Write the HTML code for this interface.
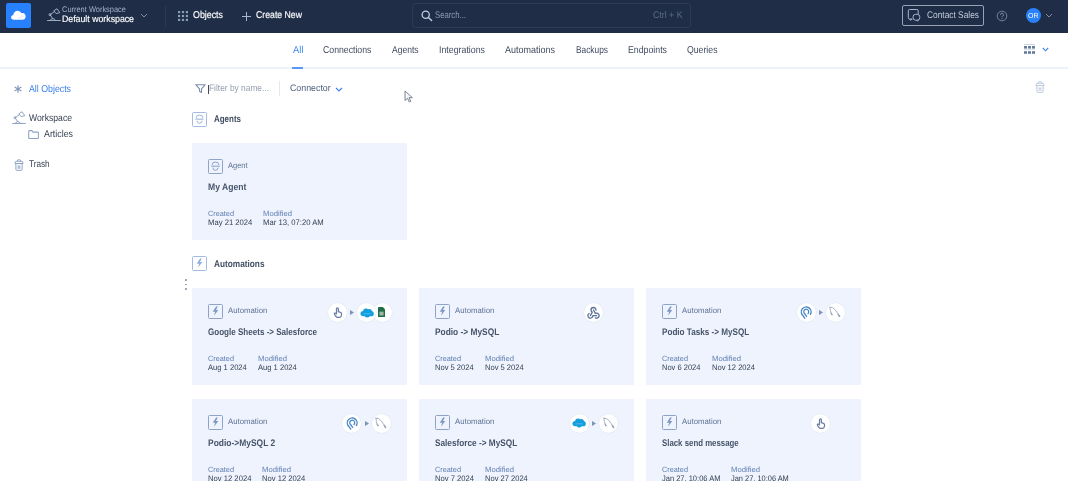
<!DOCTYPE html>
<html><head><meta charset="utf-8"><style>
html,body{margin:0;padding:0;width:1068px;height:481px;overflow:hidden;background:#fff;font-family:"Liberation Sans", sans-serif;}
.t{position:absolute;white-space:nowrap;line-height:1;transform-origin:0 0;filter:blur(0.25px);text-rendering:geometricPrecision}
svg{overflow:visible}
</style></head><body>
<div style="position:absolute;left:0;top:0;width:1068px;height:33px;background:#1f2d47"></div><div style="position:absolute;left:6px;top:3px;width:25px;height:25px;background:#2780fd;border-radius:2px"></div><svg style="position:absolute;left:10px;top:8.3px" width="17" height="13.4" viewBox="0 0 19 15">
<path d="M4.3 13.2 C2.3 13.2 1.2 11.9 1.2 10.5 C1.2 9.1 2.3 8.0 3.7 7.9 C3.9 5.2 5.9 3.2 8.5 3.2 C10.4 3.2 12.0 4.3 12.7 5.9 C13.1 5.8 13.5 5.7 13.9 5.7 C15.9 5.7 17.5 7.3 17.5 9.4 C17.5 11.5 16.0 13.2 14.0 13.2 Z" fill="#fff"/>
<path d="M8.5 12.2 L14.5 7.6 M10.5 12.4 L15.8 8.8" stroke="#c9dcfb" stroke-width="0.6" fill="none"/>
</svg><svg style="position:absolute;left:47px;top:8px" width="14" height="14" viewBox="0 0 13 13"><path d="M0.5 11.6 H12.5 M3 11.6 Q3.4 9.9 5.4 9.9 Q7.4 9.9 7.8 11.6 M5.4 9.9 L2.8 6.3 L6.8 3.4" stroke="#aab6c9" stroke-width="0.85" fill="none" stroke-linejoin="round" stroke-linecap="round"/><circle cx="2.8" cy="6.2" r="0.95" stroke="#aab6c9" stroke-width="0.8" fill="none"/><path d="M6.3 2.6 L9.3 0.7 L11.9 4.3 L8.5 5.2 Z" stroke="#aab6c9" stroke-width="0.85" fill="none" stroke-linejoin="round"/></svg><svg style="position:absolute;left:140px;top:13px" width="8" height="5" viewBox="0 0 8 5"><path d="M1 1 L4 4 L7 1" stroke="#8a97ad" stroke-width="0.9" fill="none"/></svg><div style="position:absolute;left:165px;top:6px;width:1px;height:21px;background:#2c3b54"></div><svg style="position:absolute;left:178px;top:10.5px" width="10" height="10" viewBox="0 0 10 10"><rect x="0" y="0" width="2.2" height="2.2" fill="#8e9cb4"/><rect x="0" y="3.9" width="2.2" height="2.2" fill="#8e9cb4"/><rect x="0" y="7.8" width="2.2" height="2.2" fill="#8e9cb4"/><rect x="3.9" y="0" width="2.2" height="2.2" fill="#8e9cb4"/><rect x="3.9" y="3.9" width="2.2" height="2.2" fill="#8e9cb4"/><rect x="3.9" y="7.8" width="2.2" height="2.2" fill="#8e9cb4"/><rect x="7.8" y="0" width="2.2" height="2.2" fill="#8e9cb4"/><rect x="7.8" y="3.9" width="2.2" height="2.2" fill="#8e9cb4"/><rect x="7.8" y="7.8" width="2.2" height="2.2" fill="#8e9cb4"/></svg><svg style="position:absolute;left:242px;top:11.5px" width="9" height="9" viewBox="0 0 9 9"><path d="M4.5 0 V9 M0 4.5 H9" stroke="#aab6c9" stroke-width="1"/></svg><div style="position:absolute;left:412px;top:3px;width:277px;height:23px;border:1px solid #2c3b54;border-radius:3px;box-sizing:content-box"></div><svg style="position:absolute;left:421px;top:10px" width="12" height="12" viewBox="0 0 12 12"><circle cx="4.7" cy="4.7" r="3.6" stroke="#c3cee0" stroke-width="1.3" fill="none"/><path d="M7.4 7.4 L10.6 10.6" stroke="#c3cee0" stroke-width="1.4" stroke-linecap="round"/></svg><div style="position:absolute;left:902px;top:5px;width:80px;height:19px;border:1px solid #98a2b3;border-radius:2px;box-sizing:content-box"></div><svg style="position:absolute;left:907px;top:9px" width="14" height="13" viewBox="0 0 14 13">
<path d="M5.5 10 H2.6 Q1.3 10 1.3 8.7 V1.8 Q1.3 0.5 2.6 0.5 H9.9 Q11.2 0.5 11.2 1.8 V5.2 M2.8 10 L3.5 11.4 L4.9 10" stroke="#a9b6cb" stroke-width="1" fill="none" stroke-linejoin="round"/>
<rect x="6" y="5.3" width="6.8" height="5.9" rx="2.6" stroke="#a9b6cb" stroke-width="1" fill="#1f2d47"/>
<path d="M9.8 11.2 L10.6 12.2 L11.4 11" stroke="#a9b6cb" stroke-width="1" fill="none" stroke-linejoin="round"/>
</svg><svg style="position:absolute;left:996px;top:9.5px" width="12" height="12" viewBox="0 0 12 12"><circle cx="6" cy="6" r="4.8" stroke="#7f8ba0" stroke-width="0.9" fill="none"/><path d="M4.5 4.8 A1.5 1.5 0 1 1 6.3 6.2 Q6 6.4 6 7.1" stroke="#8b97ab" stroke-width="0.9" fill="none"/><circle cx="6" cy="8.6" r="0.55" fill="#8b97ab"/></svg><div style="position:absolute;left:1026px;top:7.5px;width:15px;height:15px;border-radius:50%;background:#2982fc"></div><svg style="position:absolute;left:1045px;top:13px" width="8" height="5" viewBox="0 0 8 5"><path d="M1 1 L4 4 L7 1" stroke="#8a97ad" stroke-width="0.9" fill="none"/></svg><div style="position:absolute;left:0;top:67px;width:1068px;height:2px;background:#eef3fb"></div><div style="position:absolute;left:292px;top:67px;width:11px;height:2px;background:#5598f5"></div><svg style="position:absolute;left:1024px;top:43.5px" width="11" height="11" viewBox="0 0 11 11">
<rect x="0" y="0.3" width="11" height="0.7" fill="#b7c2d3"/>
<rect x="0" y="2" width="3" height="2.6" fill="#677b9b"/><rect x="4" y="2" width="3" height="2.6" fill="#677b9b"/><rect x="8" y="2" width="3" height="2.6" fill="#677b9b"/>
<rect x="0" y="5.4" width="11" height="0.7" fill="#c8d1de"/>
<rect x="0" y="7.2" width="3" height="2.6" fill="#677b9b"/><rect x="4" y="7.2" width="3" height="2.6" fill="#677b9b"/><rect x="8" y="7.2" width="3" height="2.6" fill="#677b9b"/>
</svg><svg style="position:absolute;left:1041.5px;top:47px" width="7" height="5" viewBox="0 0 7 5"><path d="M0.8 1 L3.5 3.8 L6.2 1" stroke="#3d86f0" stroke-width="1.1" fill="none"/></svg><svg style="position:absolute;left:1035px;top:81px" width="10" height="12" viewBox="0 0 10 12"><path d="M3.2 2.3 Q3.2 0.7 4.6 0.7 H5.4 Q6.8 0.7 6.8 2.3 M1 4.5 V3.9 Q1 2.3 2.6 2.3 H7.4 Q9 2.3 9 3.9 V4.5 Z M1.9 4.9 V10.4 Q1.9 11.3 2.8 11.3 H7.2 Q8.1 11.3 8.1 10.4 V4.9 M4.2 6.4 V9.8 M5.8 6.4 V9.8" stroke="#b4c2d8" stroke-width="0.9" fill="none" stroke-linejoin="round"/></svg><svg style="position:absolute;left:14.2px;top:85.3px" width="8" height="8" viewBox="0 0 8 8"><path d="M4 0.2 V7.8 M0.6 2.1 L7.4 5.9 M0.6 5.9 L7.4 2.1" stroke="#8397b8" stroke-width="1.15"/></svg><svg style="position:absolute;left:11.5px;top:110.5px" width="14" height="14" viewBox="0 0 13 13"><path d="M0.5 11.6 H12.5 M3 11.6 Q3.4 9.9 5.4 9.9 Q7.4 9.9 7.8 11.6 M5.4 9.9 L2.8 6.3 L6.8 3.4" stroke="#8a9dbd" stroke-width="0.85" fill="none" stroke-linejoin="round" stroke-linecap="round"/><circle cx="2.8" cy="6.2" r="0.95" stroke="#8a9dbd" stroke-width="0.8" fill="none"/><path d="M6.3 2.6 L9.3 0.7 L11.9 4.3 L8.5 5.2 Z" stroke="#8a9dbd" stroke-width="0.85" fill="none" stroke-linejoin="round"/></svg><svg style="position:absolute;left:28px;top:130px" width="11" height="9" viewBox="0 0 11 9"><path d="M0.7 1.5 Q0.7 0.6 1.6 0.6 H3.9 L5.1 2.1 H9.5 Q10.4 2.1 10.4 3 V7.7 Q10.4 8.5 9.6 8.5 H1.5 Q0.7 8.5 0.7 7.7 Z" stroke="#8ea2c6" stroke-width="1.05" fill="none" stroke-linejoin="round"/></svg><svg style="position:absolute;left:13.5px;top:158.5px" width="10" height="12" viewBox="0 0 10 12"><path d="M3.2 2.3 Q3.2 0.7 4.6 0.7 H5.4 Q6.8 0.7 6.8 2.3 M1 4.5 V3.9 Q1 2.3 2.6 2.3 H7.4 Q9 2.3 9 3.9 V4.5 Z M1.9 4.9 V10.4 Q1.9 11.3 2.8 11.3 H7.2 Q8.1 11.3 8.1 10.4 V4.9 M4.2 6.4 V9.8 M5.8 6.4 V9.8" stroke="#8ea3c8" stroke-width="1" fill="none" stroke-linejoin="round"/></svg><svg style="position:absolute;left:194.5px;top:84px" width="11" height="9" viewBox="0 0 11 9"><path d="M0.7 0.7 H10.3 L6.5 4.9 V8.4 L4.5 7.3 V4.9 Z" stroke="#7d8ea8" stroke-width="1.1" fill="none" stroke-linejoin="round"/></svg><div style="position:absolute;left:207.5px;top:84.5px;width:1px;height:9px;background:#3e4a5c"></div><div style="position:absolute;left:279px;top:81px;width:1px;height:15px;background:#e4e9f0"></div><svg style="position:absolute;left:334.5px;top:87px" width="8" height="5" viewBox="0 0 8 5"><path d="M1 1 L4 4 L7 1" stroke="#3d86f0" stroke-width="1.1" fill="none"/></svg><svg style="position:absolute;left:404px;top:90px" width="10" height="13" viewBox="0 0 10 13"><path d="M1 1 V10.5 L3.5 8.3 L5.3 12 L6.8 11.3 L5 7.7 H8.4 Z" fill="#f4f6fa" stroke="#6f7786" stroke-width="0.9" stroke-linejoin="round"/></svg><svg style="position:absolute;left:192px;top:111.5px" width="15" height="15" viewBox="0 0 15 15"><rect x="0.5" y="0.5" width="14" height="14" rx="1" stroke="#a3bbe3" stroke-width="1" fill="none"/><path d="M4.3 6.1 V5.3 Q4.3 3.1 7.5 3.1 Q10.7 3.1 10.7 5.3 V6.1 M4.9 8.7 Q5.2 11.3 7.5 11.3 Q9.8 11.3 10.1 8.7" stroke="#8eaadb" stroke-width="0.9" fill="none"/><path d="M3.4 7.2 H11.6" stroke="#8eaadb" stroke-width="1.2" opacity="0.8"/></svg><svg style="position:absolute;left:192px;top:256px" width="15" height="15" viewBox="0 0 15 15"><rect x="0.5" y="0.5" width="14" height="14" rx="1" stroke="#a3bbe3" stroke-width="1" fill="none"/><path d="M8.1 2.5 L4.8 7.7 H7.2 L6.0 11.8 L10.3 6.1 H7.9 L9.8 2.5 Z" fill="#8eaddf"/></svg><div style="position:absolute;left:185.3px;top:279.3px;width:1.4px;height:1.4px;border-radius:50%;background:#8d9bb0"></div><div style="position:absolute;left:185.3px;top:283.8px;width:1.4px;height:1.4px;border-radius:50%;background:#8d9bb0"></div><div style="position:absolute;left:185.3px;top:288.3px;width:1.4px;height:1.4px;border-radius:50%;background:#8d9bb0"></div><div style="position:absolute;left:192px;top:143px;width:215px;height:97px;background:#eef3fd;border-radius:1px"></div><svg style="position:absolute;left:208px;top:158.5px" width="15" height="15" viewBox="0 0 15 15"><rect x="0.5" y="0.5" width="14" height="14" rx="1" stroke="#8ea3c5" stroke-width="1" fill="none"/><path d="M4.3 6.1 V5.3 Q4.3 3.1 7.5 3.1 Q10.7 3.1 10.7 5.3 V6.1 M4.9 8.7 Q5.2 11.3 7.5 11.3 Q9.8 11.3 10.1 8.7" stroke="#7f98c2" stroke-width="0.9" fill="none"/><path d="M3.4 7.2 H11.6" stroke="#7f98c2" stroke-width="1.2" opacity="0.8"/></svg><div style="position:absolute;left:192px;top:288px;width:215px;height:97px;background:#eef3fd;border-radius:1px"></div><svg style="position:absolute;left:208px;top:303.5px" width="15" height="15" viewBox="0 0 15 15"><rect x="0.5" y="0.5" width="14" height="14" rx="1" stroke="#8ea3c5" stroke-width="1" fill="none"/><path d="M8.1 2.5 L4.8 7.7 H7.2 L6.0 11.8 L10.3 6.1 H7.9 L9.8 2.5 Z" fill="#7f98c2"/></svg><div style="position:absolute;left:419px;top:288px;width:215px;height:97px;background:#eef3fd;border-radius:1px"></div><svg style="position:absolute;left:435px;top:303.5px" width="15" height="15" viewBox="0 0 15 15"><rect x="0.5" y="0.5" width="14" height="14" rx="1" stroke="#8ea3c5" stroke-width="1" fill="none"/><path d="M8.1 2.5 L4.8 7.7 H7.2 L6.0 11.8 L10.3 6.1 H7.9 L9.8 2.5 Z" fill="#7f98c2"/></svg><div style="position:absolute;left:646px;top:288px;width:215px;height:97px;background:#eef3fd;border-radius:1px"></div><svg style="position:absolute;left:662px;top:303.5px" width="15" height="15" viewBox="0 0 15 15"><rect x="0.5" y="0.5" width="14" height="14" rx="1" stroke="#8ea3c5" stroke-width="1" fill="none"/><path d="M8.1 2.5 L4.8 7.7 H7.2 L6.0 11.8 L10.3 6.1 H7.9 L9.8 2.5 Z" fill="#7f98c2"/></svg><div style="position:absolute;left:192px;top:399px;width:215px;height:97px;background:#eef3fd;border-radius:1px"></div><svg style="position:absolute;left:208px;top:414.5px" width="15" height="15" viewBox="0 0 15 15"><rect x="0.5" y="0.5" width="14" height="14" rx="1" stroke="#8ea3c5" stroke-width="1" fill="none"/><path d="M8.1 2.5 L4.8 7.7 H7.2 L6.0 11.8 L10.3 6.1 H7.9 L9.8 2.5 Z" fill="#7f98c2"/></svg><div style="position:absolute;left:419px;top:399px;width:215px;height:97px;background:#eef3fd;border-radius:1px"></div><svg style="position:absolute;left:435px;top:414.5px" width="15" height="15" viewBox="0 0 15 15"><rect x="0.5" y="0.5" width="14" height="14" rx="1" stroke="#8ea3c5" stroke-width="1" fill="none"/><path d="M8.1 2.5 L4.8 7.7 H7.2 L6.0 11.8 L10.3 6.1 H7.9 L9.8 2.5 Z" fill="#7f98c2"/></svg><div style="position:absolute;left:646px;top:399px;width:215px;height:97px;background:#eef3fd;border-radius:1px"></div><svg style="position:absolute;left:662px;top:414.5px" width="15" height="15" viewBox="0 0 15 15"><rect x="0.5" y="0.5" width="14" height="14" rx="1" stroke="#8ea3c5" stroke-width="1" fill="none"/><path d="M8.1 2.5 L4.8 7.7 H7.2 L6.0 11.8 L10.3 6.1 H7.9 L9.8 2.5 Z" fill="#7f98c2"/></svg><div style="position:absolute;left:372.5px;top:302.5px;width:19px;height:19px;border-radius:50%;background:#fff;box-shadow:0 0 0 0.5px #dde6f3"></div><div style="position:absolute;left:357.0px;top:302.5px;width:19px;height:19px;border-radius:50%;background:#fff;box-shadow:0 0 0 0.5px #dde6f3"></div><div style="position:absolute;left:328.0px;top:302.5px;width:19px;height:19px;border-radius:50%;background:#fff;box-shadow:0 0 0 0.5px #dde6f3"></div><svg style="position:absolute;left:350px;top:309.5px" width="4" height="5" viewBox="0 0 4 5"><path d="M0 0 L4 2.5 L0 5 Z" fill="#7d93b6"/></svg><svg style="position:absolute;left:332.5px;top:306.8px" width="10" height="11" viewBox="0 0 10 11"><path d="M3.5 6.3 V1.7 A0.95 0.95 0 0 1 5.4 1.7 V4.7 L7.4 5.3 Q8.8 5.8 8.6 7.3 L8.3 8.8 Q7.9 10.3 6.3 10.3 H4.8 Q3.6 10.3 2.9 9.3 L1.5 7.3 Q1.0 6.4 1.9 6.1 Q2.7 5.9 3.5 6.9" stroke="#6a7ea3" stroke-width="1.25" fill="none" stroke-linejoin="round" stroke-linecap="round"/></svg><svg style="position:absolute;left:359.5px;top:307.5px" width="14" height="10" viewBox="0 0 14 10"><g fill="#139fdd"><circle cx="3.2" cy="5.6" r="2.7"/><circle cx="6" cy="3.5" r="2.9"/><circle cx="9.4" cy="3.4" r="2.5"/><circle cx="11.2" cy="5.7" r="2.6"/><circle cx="7.2" cy="6.6" r="3"/></g><path d="M3.4 5.8 H10.6" stroke="#8fd0f0" stroke-width="0.5"/></svg><svg style="position:absolute;left:378px;top:307px" width="7" height="10" viewBox="0 0 7 10"><path d="M0 0.6 Q0 0 0.6 0 H4.8 L7 2.2 V9.4 Q7 10 6.4 10 H0.6 Q0 10 0 9.4 Z" fill="#1f6e48"/><rect x="1.4" y="4.6" width="4.2" height="3.9" fill="#9fb5a8"/></svg><div style="position:absolute;left:584.0px;top:302.5px;width:19px;height:19px;border-radius:50%;background:#fff;box-shadow:0 0 0 0.5px #dde6f3"></div><svg style="position:absolute;left:586px;top:304.6px" width="15" height="15" viewBox="0 0 24 24"><path d="M4.876 13.61a4 4 0 1 0 6.124 3.39h6 M15.066 20.502a4 4 0 1 0 1.934 -7.502c-.706 0 -1.424 .179 -2 .5l-3 -5.5 M16 8a4 4 0 1 0 -8 0c0 1.506 .77 2.818 2 3.5l-3 5.5" stroke="#5a7099" stroke-width="2.1" fill="none" stroke-linecap="round" stroke-linejoin="round"/></svg><div style="position:absolute;left:796.5px;top:302.5px;width:19px;height:19px;border-radius:50%;background:#fff;box-shadow:0 0 0 0.5px #dde6f3"></div><svg style="position:absolute;left:819px;top:309.5px" width="4" height="5" viewBox="0 0 4 5"><path d="M0 0 L4 2.5 L0 5 Z" fill="#7d93b6"/></svg><div style="position:absolute;left:825.5px;top:302.5px;width:19px;height:19px;border-radius:50%;background:#fff;box-shadow:0 0 0 0.5px #dde6f3"></div><svg style="position:absolute;left:800px;top:305.5px" width="12" height="13" viewBox="0 0 12 13"><path d="M4.7 12.1 L3.0 9.6 A4.9 4.9 0 1 1 10.4 8.4" stroke="#4684c4" stroke-width="1.35" fill="none" stroke-linecap="round"/><path d="M6.6 10.4 L4.8 7.8 A2.5 2.5 0 1 1 8.0 7.5" stroke="#4684c4" stroke-width="1.25" fill="none" stroke-linecap="round"/></svg><svg style="position:absolute;left:829px;top:306px" width="12" height="12" viewBox="0 0 12 12"><path d="M0.9 1.1 Q3.8 0.7 6.3 3.9 Q8.4 6.7 10.5 10.2 M0.9 1.1 Q1.1 5 2.5 8.0 L3.5 8.7" stroke="#97a5bb" stroke-width="0.85" fill="none" stroke-linecap="round" stroke-linejoin="round"/><path d="M9.3 8.5 L10.6 10.5" stroke="#97a5bb" stroke-width="1.5" stroke-linecap="round"/><path d="M2.2 7.2 L2.9 8.6" stroke="#97a5bb" stroke-width="1.3" stroke-linecap="round"/></svg><div style="position:absolute;left:342.1px;top:413.5px;width:19px;height:19px;border-radius:50%;background:#fff;box-shadow:0 0 0 0.5px #dde6f3"></div><svg style="position:absolute;left:365px;top:420.5px" width="4" height="5" viewBox="0 0 4 5"><path d="M0 0 L4 2.5 L0 5 Z" fill="#7d93b6"/></svg><div style="position:absolute;left:371.8px;top:413.5px;width:19px;height:19px;border-radius:50%;background:#fff;box-shadow:0 0 0 0.5px #dde6f3"></div><svg style="position:absolute;left:345.6px;top:416.5px" width="12" height="13" viewBox="0 0 12 13"><path d="M4.7 12.1 L3.0 9.6 A4.9 4.9 0 1 1 10.4 8.4" stroke="#4684c4" stroke-width="1.35" fill="none" stroke-linecap="round"/><path d="M6.6 10.4 L4.8 7.8 A2.5 2.5 0 1 1 8.0 7.5" stroke="#4684c4" stroke-width="1.25" fill="none" stroke-linecap="round"/></svg><svg style="position:absolute;left:375.3px;top:417px" width="12" height="12" viewBox="0 0 12 12"><path d="M0.9 1.1 Q3.8 0.7 6.3 3.9 Q8.4 6.7 10.5 10.2 M0.9 1.1 Q1.1 5 2.5 8.0 L3.5 8.7" stroke="#97a5bb" stroke-width="0.85" fill="none" stroke-linecap="round" stroke-linejoin="round"/><path d="M9.3 8.5 L10.6 10.5" stroke="#97a5bb" stroke-width="1.5" stroke-linecap="round"/><path d="M2.2 7.2 L2.9 8.6" stroke="#97a5bb" stroke-width="1.3" stroke-linecap="round"/></svg><div style="position:absolute;left:569.8px;top:413.5px;width:19px;height:19px;border-radius:50%;background:#fff;box-shadow:0 0 0 0.5px #dde6f3"></div><svg style="position:absolute;left:592px;top:420.5px" width="4" height="5" viewBox="0 0 4 5"><path d="M0 0 L4 2.5 L0 5 Z" fill="#7d93b6"/></svg><div style="position:absolute;left:599.0px;top:413.5px;width:19px;height:19px;border-radius:50%;background:#fff;box-shadow:0 0 0 0.5px #dde6f3"></div><svg style="position:absolute;left:572.3px;top:418px" width="14" height="10" viewBox="0 0 14 10"><g fill="#139fdd"><circle cx="3.2" cy="5.6" r="2.7"/><circle cx="6" cy="3.5" r="2.9"/><circle cx="9.4" cy="3.4" r="2.5"/><circle cx="11.2" cy="5.7" r="2.6"/><circle cx="7.2" cy="6.6" r="3"/></g><path d="M3.4 5.8 H10.6" stroke="#8fd0f0" stroke-width="0.5"/></svg><svg style="position:absolute;left:602.5px;top:417px" width="12" height="12" viewBox="0 0 12 12"><path d="M0.9 1.1 Q3.8 0.7 6.3 3.9 Q8.4 6.7 10.5 10.2 M0.9 1.1 Q1.1 5 2.5 8.0 L3.5 8.7" stroke="#97a5bb" stroke-width="0.85" fill="none" stroke-linecap="round" stroke-linejoin="round"/><path d="M9.3 8.5 L10.6 10.5" stroke="#97a5bb" stroke-width="1.5" stroke-linecap="round"/><path d="M2.2 7.2 L2.9 8.6" stroke="#97a5bb" stroke-width="1.3" stroke-linecap="round"/></svg><div style="position:absolute;left:811.0px;top:413.5px;width:19px;height:19px;border-radius:50%;background:#fff;box-shadow:0 0 0 0.5px #dde6f3"></div><svg style="position:absolute;left:815.5px;top:417.8px" width="10" height="11" viewBox="0 0 10 11"><path d="M3.5 6.3 V1.7 A0.95 0.95 0 0 1 5.4 1.7 V4.7 L7.4 5.3 Q8.8 5.8 8.6 7.3 L8.3 8.8 Q7.9 10.3 6.3 10.3 H4.8 Q3.6 10.3 2.9 9.3 L1.5 7.3 Q1.0 6.4 1.9 6.1 Q2.7 5.9 3.5 6.9" stroke="#6a7ea3" stroke-width="1.25" fill="none" stroke-linejoin="round" stroke-linecap="round"/></svg>
<div class=t style='left:62px;top:6.00px;font-size:8.2px;font-weight:400;color:#a6b3c8;transform:scaleX(0.9092);'>Current Workspace</div><div class=t style='left:62px;top:15.00px;font-size:9.45px;font-weight:400;color:#ffffff;transform:scaleX(0.9273);-webkit-text-stroke:0.15px #fff;'>Default workspace</div><div class=t style='left:193px;top:11.00px;font-size:9.9px;font-weight:400;color:#ffffff;transform:scaleX(0.8959);-webkit-text-stroke:0.15px #fff;'>Objects</div><div class=t style='left:256px;top:11.00px;font-size:9.9px;font-weight:400;color:#ffffff;transform:scaleX(0.8822);-webkit-text-stroke:0.15px #fff;'>Create New</div><div class=t style='left:435px;top:11.00px;font-size:9.6px;font-weight:400;color:#8b9ab2;transform:scaleX(0.8072);'>Search...</div><div class=t style='left:653px;top:11.00px;font-size:9.6px;font-weight:400;color:#5d6d87;transform:scaleX(0.9143);'>Ctrl + K</div><div class=t style='left:927px;top:11.00px;font-size:9.6px;font-weight:400;color:#c3cbd8;transform:scaleX(0.8705);'>Contact Sales</div><div class=t style='left:1028.3px;top:12.00px;font-size:7.2px;font-weight:400;color:#ffffff;transform:scaleX(0.9739);'>OR</div><div class=t style='left:292.6px;top:46.00px;font-size:9.9px;font-weight:400;color:#3f8af0;transform:scaleX(0.9559);'>All</div><div class=t style='left:323px;top:46.00px;font-size:9.9px;font-weight:400;color:#3f4b60;transform:scaleX(0.8815);'>Connections</div><div class=t style='left:392px;top:46.00px;font-size:9.9px;font-weight:400;color:#3f4b60;transform:scaleX(0.8650);'>Agents</div><div class=t style='left:439px;top:46.00px;font-size:9.9px;font-weight:400;color:#3f4b60;transform:scaleX(0.8913);'>Integrations</div><div class=t style='left:505px;top:46.00px;font-size:9.9px;font-weight:400;color:#3f4b60;transform:scaleX(0.9106);'>Automations</div><div class=t style='left:575.5px;top:46.00px;font-size:9.9px;font-weight:400;color:#3f4b60;transform:scaleX(0.8445);'>Backups</div><div class=t style='left:627.5px;top:46.00px;font-size:9.9px;font-weight:400;color:#3f4b60;transform:scaleX(0.8879);'>Endpoints</div><div class=t style='left:686.5px;top:46.00px;font-size:9.9px;font-weight:400;color:#3f4b60;transform:scaleX(0.8821);'>Queries</div><div class=t style='left:28.7px;top:85.00px;font-size:9.9px;font-weight:400;color:#3a80ea;transform:scaleX(0.8898);'>All Objects</div><div class=t style='left:28.7px;top:114.00px;font-size:9.9px;font-weight:400;color:#333e50;transform:scaleX(0.8737);'>Workspace</div><div class=t style='left:43.7px;top:130.00px;font-size:9.9px;font-weight:400;color:#333e50;transform:scaleX(0.8958);'>Articles</div><div class=t style='left:28.7px;top:160.00px;font-size:9.7px;font-weight:400;color:#333e50;transform:scaleX(0.8440);'>Trash</div><div class=t style='left:208.6px;top:84.00px;font-size:9.45px;font-weight:400;color:#959fae;transform:scaleX(0.8866);'>Filter by name...</div><div class=t style='left:290px;top:84.00px;font-size:9.45px;font-weight:400;color:#4f6080;transform:scaleX(0.9346);'>Connector</div><div class=t style='left:214px;top:115.00px;font-size:9.7px;font-weight:700;color:#414d63;transform:scaleX(0.8221);'>Agents</div><div class=t style='left:214px;top:260.00px;font-size:9.7px;font-weight:700;color:#414d63;transform:scaleX(0.8530);'>Automations</div><div class=t style='left:228.4px;top:162.00px;font-size:8.0px;font-weight:400;color:#5c7095;transform:scaleX(0.9375);'>Agent</div><div class=t style='left:208px;top:183.00px;font-size:9.5px;font-weight:700;color:#48546a;transform:scaleX(0.9032);'>My Agent</div><div class=t style='left:208px;top:210.00px;font-size:7.6px;font-weight:400;color:#5f7fb2;transform:scaleX(0.9618);'>Created</div><div class=t style='left:208px;top:219.00px;font-size:8.0px;font-weight:400;color:#333f52;transform:scaleX(0.9597);'>May 21 2024</div><div class=t style='left:262.7px;top:210.00px;font-size:7.6px;font-weight:400;color:#5f7fb2;transform:scaleX(1.0103);'>Modified</div><div class=t style='left:262.7px;top:219.00px;font-size:8.0px;font-weight:400;color:#333f52;transform:scaleX(0.9611);'>Mar 13, 07:20 AM</div><div class=t style='left:228.4px;top:307.00px;font-size:8.0px;font-weight:400;color:#5c7095;transform:scaleX(0.9711);'>Automation</div><div class=t style='left:208px;top:328.00px;font-size:9.5px;font-weight:700;color:#48546a;transform:scaleX(0.8478);'>Google Sheets -&gt; Salesforce</div><div class=t style='left:208px;top:355.00px;font-size:7.6px;font-weight:400;color:#5f7fb2;transform:scaleX(0.9618);'>Created</div><div class=t style='left:208px;top:364.00px;font-size:8.0px;font-weight:400;color:#333f52;transform:scaleX(0.9478);'>Aug 1 2024</div><div class=t style='left:257.6px;top:355.00px;font-size:7.6px;font-weight:400;color:#5f7fb2;transform:scaleX(1.0103);'>Modified</div><div class=t style='left:257.6px;top:364.00px;font-size:8.0px;font-weight:400;color:#333f52;transform:scaleX(0.9478);'>Aug 1 2024</div><div class=t style='left:455.4px;top:307.00px;font-size:8.0px;font-weight:400;color:#5c7095;transform:scaleX(0.9711);'>Automation</div><div class=t style='left:435px;top:328.00px;font-size:9.5px;font-weight:700;color:#48546a;transform:scaleX(0.8795);'>Podio -&gt; MySQL</div><div class=t style='left:435px;top:355.00px;font-size:7.6px;font-weight:400;color:#5f7fb2;transform:scaleX(0.9618);'>Created</div><div class=t style='left:435px;top:364.00px;font-size:8.0px;font-weight:400;color:#333f52;transform:scaleX(0.9457);'>Nov 5 2024</div><div class=t style='left:484.9px;top:355.00px;font-size:7.6px;font-weight:400;color:#5f7fb2;transform:scaleX(1.0103);'>Modified</div><div class=t style='left:484.9px;top:364.00px;font-size:8.0px;font-weight:400;color:#333f52;transform:scaleX(0.9457);'>Nov 5 2024</div><div class=t style='left:682.4px;top:307.00px;font-size:8.0px;font-weight:400;color:#5c7095;transform:scaleX(0.9711);'>Automation</div><div class=t style='left:662px;top:328.00px;font-size:9.5px;font-weight:700;color:#48546a;transform:scaleX(0.8560);'>Podio Tasks -&gt; MySQL</div><div class=t style='left:662px;top:355.00px;font-size:7.6px;font-weight:400;color:#5f7fb2;transform:scaleX(0.9618);'>Created</div><div class=t style='left:662px;top:364.00px;font-size:8.0px;font-weight:400;color:#333f52;transform:scaleX(0.9408);'>Nov 6 2024</div><div class=t style='left:712px;top:355.00px;font-size:7.6px;font-weight:400;color:#5f7fb2;transform:scaleX(1.0103);'>Modified</div><div class=t style='left:712px;top:364.00px;font-size:8.0px;font-weight:400;color:#333f52;transform:scaleX(0.9477);'>Nov 12 2024</div><div class=t style='left:228.4px;top:418.00px;font-size:8.0px;font-weight:400;color:#5c7095;transform:scaleX(0.9711);'>Automation</div><div class=t style='left:208px;top:439.00px;font-size:9.5px;font-weight:700;color:#48546a;transform:scaleX(0.8891);'>Podio-&gt;MySQL 2</div><div class=t style='left:208px;top:466.00px;font-size:7.6px;font-weight:400;color:#5f7fb2;transform:scaleX(0.9618);'>Created</div><div class=t style='left:208px;top:475.00px;font-size:8.0px;font-weight:400;color:#333f52;transform:scaleX(0.9565);'>Nov 12 2024</div><div class=t style='left:262px;top:466.00px;font-size:7.6px;font-weight:400;color:#5f7fb2;transform:scaleX(1.0103);'>Modified</div><div class=t style='left:262px;top:475.00px;font-size:8.0px;font-weight:400;color:#333f52;transform:scaleX(0.9521);'>Nov 12 2024</div><div class=t style='left:455.4px;top:418.00px;font-size:8.0px;font-weight:400;color:#5c7095;transform:scaleX(0.9711);'>Automation</div><div class=t style='left:435px;top:439.00px;font-size:9.5px;font-weight:700;color:#48546a;transform:scaleX(0.8673);'>Salesforce -&gt; MySQL</div><div class=t style='left:435px;top:466.00px;font-size:7.6px;font-weight:400;color:#5f7fb2;transform:scaleX(0.9618);'>Created</div><div class=t style='left:435px;top:475.00px;font-size:8.0px;font-weight:400;color:#333f52;transform:scaleX(0.9530);'>Nov 7 2024</div><div class=t style='left:485px;top:466.00px;font-size:7.6px;font-weight:400;color:#5f7fb2;transform:scaleX(1.0103);'>Modified</div><div class=t style='left:485px;top:475.00px;font-size:8.0px;font-weight:400;color:#333f52;transform:scaleX(0.9433);'>Nov 27 2024</div><div class=t style='left:682.4px;top:418.00px;font-size:8.0px;font-weight:400;color:#5c7095;transform:scaleX(0.9711);'>Automation</div><div class=t style='left:662px;top:439.00px;font-size:9.5px;font-weight:700;color:#48546a;transform:scaleX(0.8251);'>Slack send message</div><div class=t style='left:662px;top:466.00px;font-size:7.6px;font-weight:400;color:#5f7fb2;transform:scaleX(0.9618);'>Created</div><div class=t style='left:662px;top:475.00px;font-size:8.0px;font-weight:400;color:#333f52;transform:scaleX(0.9379);'>Jan 27, 10:06 AM</div><div class=t style='left:731.3px;top:466.00px;font-size:7.6px;font-weight:400;color:#5f7fb2;transform:scaleX(1.0103);'>Modified</div><div class=t style='left:731.3px;top:475.00px;font-size:8.0px;font-weight:400;color:#333f52;transform:scaleX(0.9283);'>Jan 27, 10:06 AM</div>
</body></html>
